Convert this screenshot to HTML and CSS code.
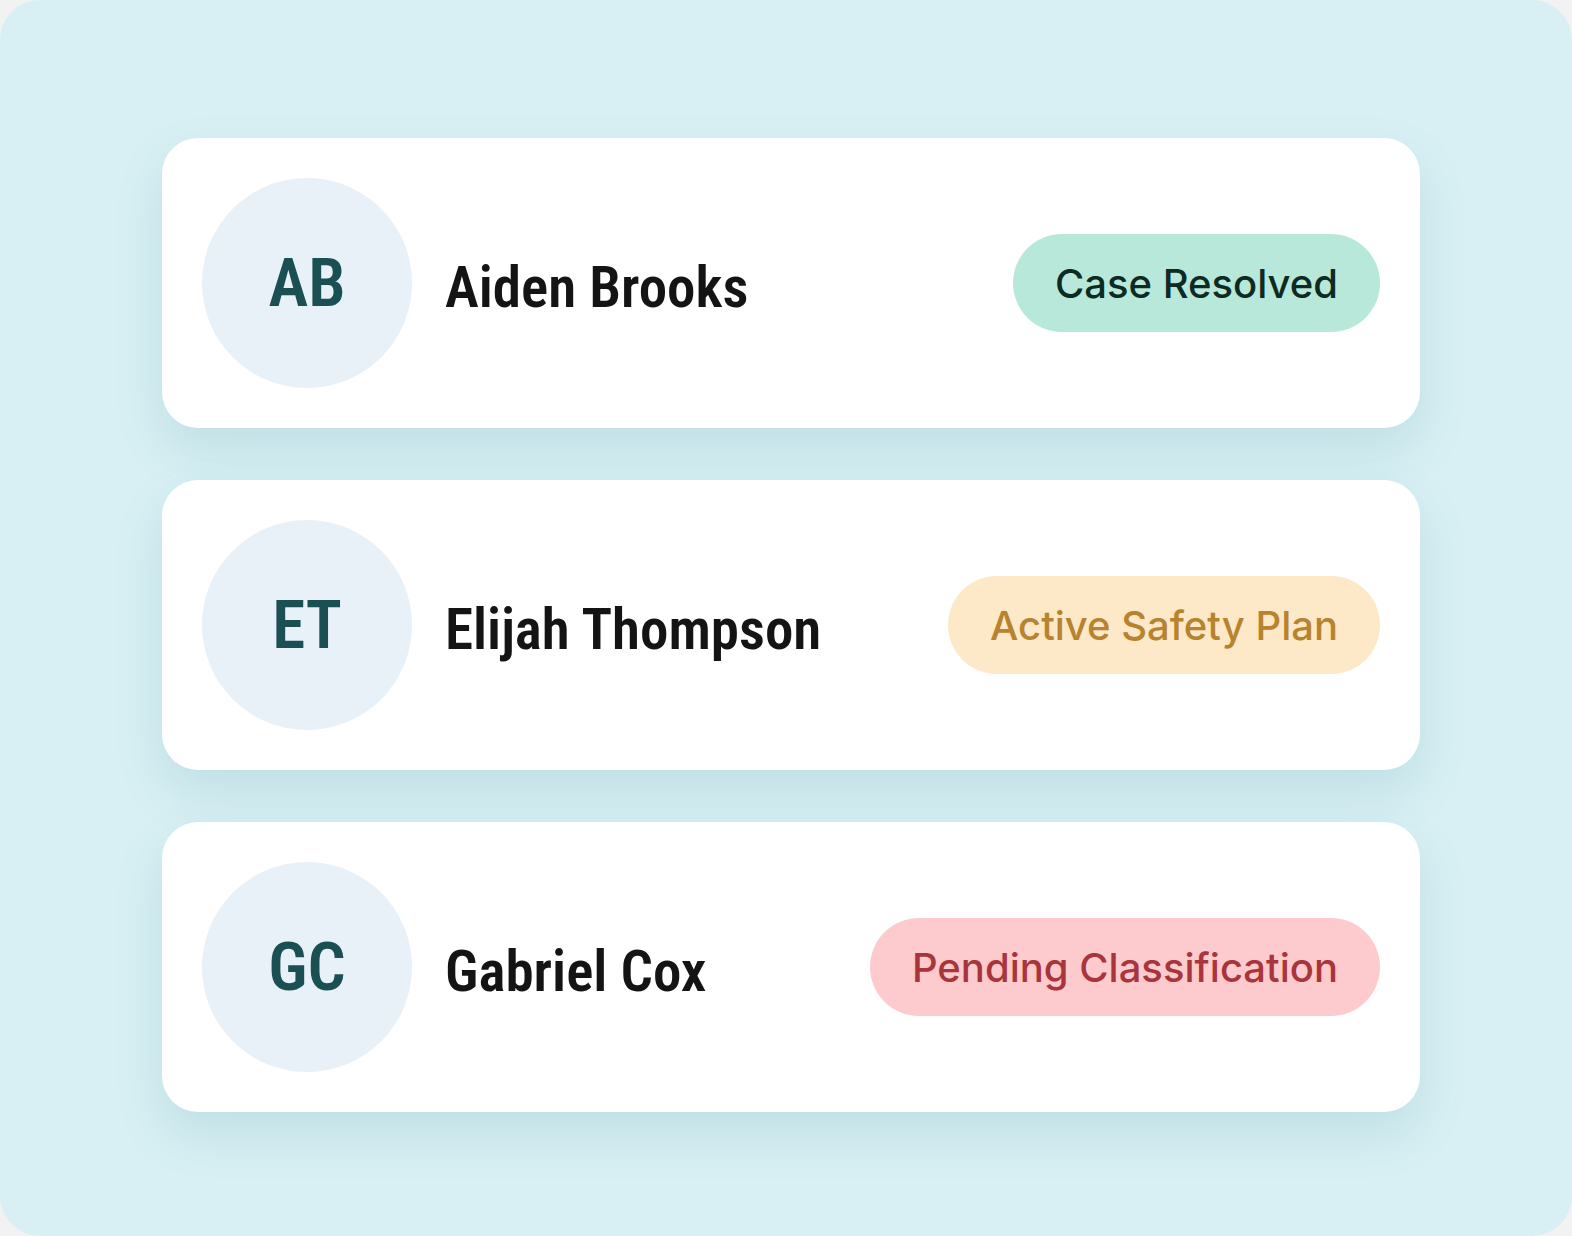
FILE: index.html
```html
<!DOCTYPE html>
<html lang="en">
<head>
    <meta charset="UTF-8">
    <meta name="viewport" content="width=device-width, initial-scale=1.0">
    <title>cases</title>
    <link rel="stylesheet" href="styles.css">
</head>
<body>
<div id="frame">
    <div class="card">
        <div class="avatar">AB</div>
        <p class="name">Aiden Brooks</p>
        <span class="badge resolved">Case Resolved</span>
    </div>
    <div class="card">
        <div class="avatar">ET</div>
        <p class="name">Elijah Thompson</p>
        <span class="badge active">Active Safety Plan</span>
    </div>
    <div class="card">
        <div class="avatar">GC</div>
        <p class="name">Gabriel Cox</p>
        <span class="badge pending">Pending Classification</span>
    </div>
</div>
</body>
</html>
```

FILE: styles.css
```css
* {
    padding: 0;
    margin: 0;
    box-sizing: border-box;
}
body {
    background: #f2f2f2;
}
#frame {
    width: 1572px;
    height: 1236px;
    border-radius: 40px;
    background: #d8f0f4;
    padding: 138px 152px 0 162px;
    display: flex;
    flex-direction: column;
    gap: 52px;
}
.card {
    height: 290px;
    background: #ffffff;
    border-radius: 36px;
    padding: 40px;
    display: flex;
    align-items: center;
    box-shadow: 0 22px 50px rgba(40, 120, 135, 0.14);
}
.avatar {
    width: 210px;
    height: 210px;
    border-radius: 50%;
    background: #e8f0f8;
    display: flex;
    align-items: center;
    justify-content: center;
    font-family: Roboto, sans-serif;
    font-stretch: 75%;
    font-weight: 600;
    font-size: 67px;
    color: #1a4f54;
    flex-shrink: 0;
}
.name {
    margin-left: 33px;
    padding-top: 8px;
    flex: 1;
    white-space: nowrap;
    font-family: Roboto, sans-serif;
    font-stretch: 75%;
    font-weight: 600;
    font-size: 57px;
    color: #141414;
}
.badge {
    height: 98px;
    border-radius: 49px;
    padding: 0 42px;
    display: flex;
    align-items: center;
    white-space: nowrap;
    font-family: Inter, sans-serif;
    font-weight: 500;
    font-size: 40px;
}
.resolved {
    background: #b8e8da;
    color: #0d2b22;
}
.active {
    background: #fde8c8;
    color: #b8832e;
}
.pending {
    background: #fdcacd;
    color: #a8343c;
}
```
